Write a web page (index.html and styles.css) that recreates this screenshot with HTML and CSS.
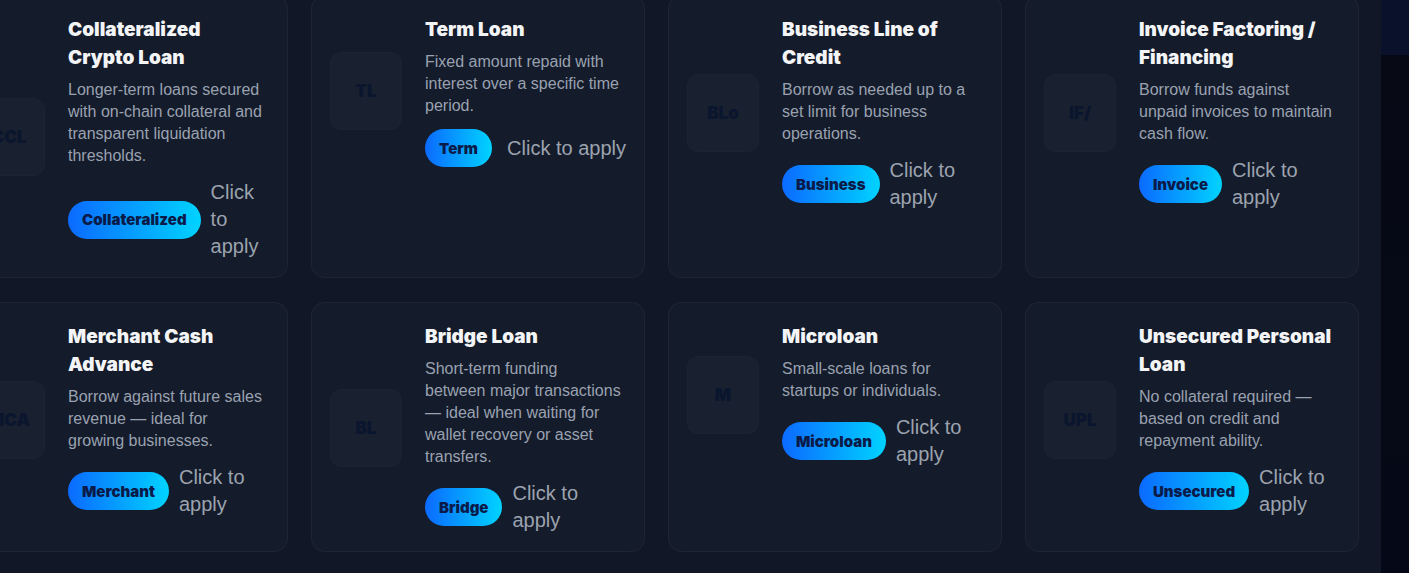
FILE: index.html
```html
<!DOCTYPE html>
<html lang="en">
<head>
<meta charset="utf-8">
<title>Loan Products</title>
<link rel="stylesheet" href="styles.css">
</head>
<body>
<div class="app">
  <main class="main">
    <div class="grid">
      <article class="card">
        <div class="inner">
          <div class="icon">CCL</div>
          <div class="body">
            <h3 class="title">Collateralized Crypto Loan</h3>
            <p class="desc">Longer-term loans secured with on-chain collateral and transparent liquidation thresholds.</p>
            <div class="cta"><span class="badge">Collateralized</span><span class="apply">Click to apply</span></div>
          </div>
        </div>
      </article>
      <article class="card">
        <div class="inner">
          <div class="icon">TL</div>
          <div class="body">
            <h3 class="title">Term Loan</h3>
            <p class="desc">Fixed amount repaid with interest over a specific time period.</p>
            <div class="cta"><span class="badge">Term</span><span class="apply">Click to apply</span></div>
          </div>
        </div>
      </article>
      <article class="card">
        <div class="inner">
          <div class="icon">BLo</div>
          <div class="body">
            <h3 class="title">Business Line of Credit</h3>
            <p class="desc">Borrow as needed up to a set limit for business operations.</p>
            <div class="cta"><span class="badge">Business</span><span class="apply">Click to apply</span></div>
          </div>
        </div>
      </article>
      <article class="card">
        <div class="inner">
          <div class="icon">IF/</div>
          <div class="body">
            <h3 class="title">Invoice Factoring / Financing</h3>
            <p class="desc">Borrow funds against unpaid invoices to maintain cash flow.</p>
            <div class="cta"><span class="badge">Invoice</span><span class="apply">Click to apply</span></div>
          </div>
        </div>
      </article>
      <article class="card">
        <div class="inner">
          <div class="icon">MCA</div>
          <div class="body">
            <h3 class="title">Merchant Cash Advance</h3>
            <p class="desc">Borrow against future sales revenue — ideal for growing businesses.</p>
            <div class="cta"><span class="badge">Merchant</span><span class="apply">Click to apply</span></div>
          </div>
        </div>
      </article>
      <article class="card">
        <div class="inner">
          <div class="icon">BL</div>
          <div class="body">
            <h3 class="title">Bridge Loan</h3>
            <p class="desc">Short-term funding between major transactions — ideal when waiting for wallet recovery or asset transfers.</p>
            <div class="cta"><span class="badge">Bridge</span><span class="apply">Click to apply</span></div>
          </div>
        </div>
      </article>
      <article class="card">
        <div class="inner">
          <div class="icon">M</div>
          <div class="body">
            <h3 class="title">Microloan</h3>
            <p class="desc">Small-scale loans for startups or individuals.</p>
            <div class="cta"><span class="badge">Microloan</span><span class="apply">Click to apply</span></div>
          </div>
        </div>
      </article>
      <article class="card">
        <div class="inner">
          <div class="icon">UPL</div>
          <div class="body">
            <h3 class="title">Unsecured Personal Loan</h3>
            <p class="desc">No collateral required — based on credit and repayment ability.</p>
            <div class="cta"><span class="badge">Unsecured</span><span class="apply">Click to apply</span></div>
          </div>
        </div>
      </article>
    </div>
  </main>
  <aside class="side">
    <div class="side-top"></div>
  </aside>
</div>
</body>
</html>
```

FILE: styles.css
```css
* { box-sizing: border-box; }

html, body {
  margin: 0;
  padding: 0;
  height: 573px;
  overflow: hidden;
  background: #111726;
}

.app {
  display: flex;
  height: 573px;
}

.main {
  flex: 1;
  min-width: 0;
  overflow: hidden;
  background: #111726;
}

.grid {
  display: grid;
  grid-template-columns: repeat(4, 334px);
  column-gap: 23px;
  row-gap: 24px;
  margin-left: -46px;
  margin-top: -5px;
}

.card {
  background: #141b2a;
  border: 1px solid rgba(255, 255, 255, 0.045);
  border-radius: 14px;
  padding: 18px 18px 17px 18px;
}

.inner {
  display: flex;
  align-items: center;
  gap: 23px;
}

.icon {
  flex: none;
  width: 72px;
  height: 78px;
  border-radius: 12px;
  background: rgba(255, 255, 255, 0.022);
  border: 1px solid rgba(255, 255, 255, 0.015);
  display: flex;
  align-items: center;
  justify-content: center;
  font-family: Inter, "Liberation Sans", sans-serif;
  font-weight: 900;
  font-size: 17px;
  color: #0a152e;
}

.body {
  flex: 1;
  min-width: 0;
}

.title {
  margin: 0 0 7px;
  padding-top: 2px;
  font-family: Inter, "Liberation Sans", sans-serif;
  font-weight: 900;
  font-size: 19px;
  line-height: 28px;
  color: #f3f4f6;
}

.desc {
  max-width: 196px;
  margin: 0 0 12px;
  font-family: "Liberation Sans", Arial, sans-serif;
  font-size: 16px;
  line-height: 22px;
  color: #9aa2b1;
}

.cta {
  display: flex;
  align-items: center;
  justify-content: space-between;
  gap: 10px;
}

.badge {
  flex: none;
  display: inline-flex;
  align-items: center;
  height: 38px;
  padding: 0 14px;
  border-radius: 19px;
  background: linear-gradient(90deg, #0b6aff 0%, #00d3ff 100%);
  font-family: Inter, "Liberation Sans", sans-serif;
  font-weight: 900;
  font-size: 15px;
  color: #0a1b4a;
}

.apply {
  font-family: "Liberation Sans", Arial, sans-serif;
  font-size: 20px;
  line-height: 27px;
  color: #9ca3af;
}

.side {
  flex: none;
  width: 28px;
  display: flex;
  flex-direction: column;
  background: linear-gradient(180deg, #070a15 0%, #050816 100%);
}

.side-top {
  height: 55px;
  background: #09112b;
}
```
